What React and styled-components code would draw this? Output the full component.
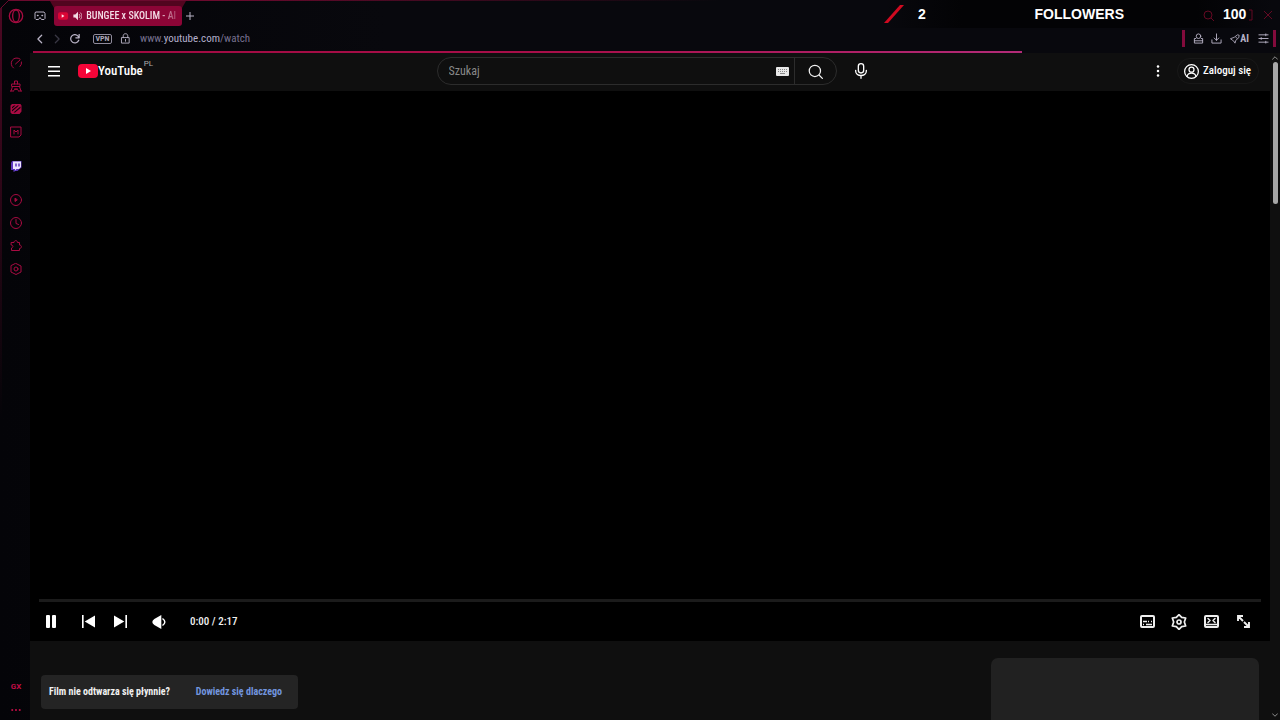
import React from "react";
import styled, { createGlobalStyle } from "styled-components";

const Global = createGlobalStyle`
  *, *::before, *::after { box-sizing: border-box; }
  body { margin: 0; background: #05060a; color: #f1f1f1; font-family: "Roboto Condensed", Roboto, "Liberation Sans", sans-serif; font-size: 10px; line-height: 14px; }
  button, input { font: inherit; color: inherit; }
`;

const Window = styled.div`
  position: relative;
  display: flex;
  flex-direction: column;
  height: 100vh;
  min-height: 400px;
  overflow: hidden;
  background: linear-gradient(90deg, #040408, #08080d 30%);
`;
const FrameEdge = styled.svg`
  position: absolute;
  top: 0;
  left: 0;
  pointer-events: none;
`;
const IconButton = styled.button`
  display: inline-flex;
  align-items: center;
  justify-content: center;
  flex: none;
  width: ${(p) => p.$w || 16}px;
  height: ${(p) => p.$h || 16}px;
  padding: 0;
  border: 0;
  background: none;
  color: ${(p) => p.$color || "#b9b3c6"};
`;
const TabBar = styled.header`
  display: flex;
  align-items: center;
  height: 30px;
  padding: 1px 8px 0;
`;
const Workspace = styled.div`
  display: flex;
  justify-content: center;
  width: 30px;
  padding-left: 2px;
`;
const Tab = styled.div`
  position: relative;
  display: flex;
  align-items: center;
  gap: 4px;
  width: 128px;
  height: 20px;
  padding: 0 6px 0 4px;
  border-radius: 3px;
  background: #8c0536;
  color: #f3dde6;
`;
const TabTitle = styled.span`
  flex: 1;
  font-weight: 500;
  white-space: nowrap;
  mask-image: linear-gradient(90deg, #000 80%, #0004);
`;
const AddressBar = styled.div`
  display: flex;
  align-items: center;
  height: 21px;
  padding: 0 4px 4px 32px;
`;
const VpnBadge = styled.button`
  display: flex;
  align-items: center;
  justify-content: center;
  width: 19px;
  height: 10px;
  margin: 0 5px 0 9px;
  padding: 0;
  border: 1px solid #8f8a9b;
  border-radius: 2px;
  background: none;
  color: #aaa5b6;
  font-size: 8px;
  line-height: 8px;
  font-weight: 700;
`;
const Address = styled.a`
  flex: 1;
  margin-left: 7px;
  color: #77718f;
  font-size: 11px;
  text-decoration: none;
  b { color: #b4afcb; font-weight: 400; }
`;
const AccentBar = styled.span`
  width: 3px;
  height: 17px;
  background: #830b3c;
`;
const BrowserTools = styled.div`
  display: flex;
  align-items: center;
  gap: 2px;
  padding: 0 2px 0 5px;
`;
const AiButton = styled(IconButton)`
  width: 27px;
  font-size: 10px;
  font-weight: 700;
`;
const Body = styled.div`
  display: flex;
  flex: 1;
  min-height: 0;
`;
const Sidebar = styled.nav`
  display: flex;
  flex-direction: column;
  align-items: center;
  gap: 22px;
  flex: none;
  width: 30px;
  padding: 6px 0 4px 2px;
`;
const SideGroup = styled.div`
  display: flex;
  flex-direction: column;
  gap: 11px;
`;
const SideFooter = styled(SideGroup)`
  margin-top: auto;
  font-family: Roboto, sans-serif;
  font-size: 8px;
  font-weight: 700;
  line-height: 12px;
`;
const SideButton = styled(IconButton).attrs({ $w: 12, $h: 12 })`
  color: ${(p) => p.$tint || "#a80b42"};
`;
const Page = styled.div`
  display: flex;
  flex-direction: column;
  flex: 1;
  min-width: 0;
`;
const LoadTrack = styled.div`
  height: 2px;
  padding-left: 3px;
`;
const LoadBar = styled.div`
  width: ${(p) => p.$value}%;
  height: 2px;
  background: linear-gradient(90deg, #a00a40, #a90f4a 55%, #b32b78);
`;
const PageRow = styled.div`
  display: flex;
  flex: 1;
  min-height: 0;
  background: #0f0f0f;
`;
const Site = styled.div`
  display: flex;
  flex-direction: column;
  flex: 1;
  min-width: 0;
`;
const SiteHeader = styled.header`
  display: grid;
  grid-template-columns: 1fr auto 1fr;
  align-items: center;
  flex: none;
  height: 38px;
  padding: 0 11px 2px 16px;
`;
const HeaderStart = styled.div`
  display: flex;
  align-items: center;
`;
const Logo = styled.a`
  display: flex;
  align-items: center;
  margin-left: 16px;
  color: #fff;
  text-decoration: none;
  font-size: 13px;
  line-height: 16px;
  font-weight: 500;
  sup {
    align-self: flex-start;
    margin: -3px 0 0 1px;
    color: #aaa;
    font: 400 8px/8px Roboto, sans-serif;
  }
`;
const SearchArea = styled.div`
  display: flex;
  align-items: center;
  gap: 16px;
`;
const SearchForm = styled.form`
  display: flex;
  align-items: center;
  width: 400px;
  max-width: 50vw;
  height: 28px;
  border: 1px solid #2c2c2c;
  border-radius: 14px;
  overflow: hidden;
`;
const SearchInput = styled.input`
  flex: 1;
  min-width: 0;
  padding: 0 11px;
  border: 0;
  background: none;
  font-size: 12px;
  &::placeholder { color: #898989; opacity: 1; }
`;
const SearchSubmit = styled(IconButton)`
  width: 42px;
  height: 28px;
  margin-left: 5px;
  border-left: 1px solid #2c2c2c;
`;
const HeaderEnd = styled.div`
  display: flex;
  align-items: center;
  justify-content: flex-end;
  gap: 11px;
`;
const SignIn = styled.a`
  display: flex;
  align-items: center;
  gap: 4px;
  width: 82px;
  height: 26px;
  padding: 0 6px;
  border: 1px solid #181818;
  border-radius: 13px;
  color: #fff;
  font-size: 11px;
  font-weight: 500;
  text-decoration: none;
  white-space: nowrap;
`;
const Player = styled.main`
  display: flex;
  flex-direction: column;
  justify-content: flex-end;
  flex: 1;
  min-height: 0;
  padding: 0 9px;
  background: #000;
`;
const SeekTrack = styled.div`
  height: 3px;
  background: #1b1b1b;
`;
const Controls = styled.div`
  display: flex;
  align-items: center;
  height: 39px;
`;
const ControlGroup = styled.div`
  display: flex;
  align-items: center;
  gap: 16px;
  margin-left: ${(p) => (p.$end ? "auto" : "0")};
  padding: ${(p) => (p.$end ? "0 10px 0 0" : "0 0 0 4px")};
`;
const PauseSlot = styled.div`
  display: flex;
  margin-right: 5px;
`;
const VolumeSlot = styled.div`
  display: flex;
  margin: 0 7px;
`;
const Time = styled.span`
  font-size: 11px;
  font-weight: 500;
`;
const Below = styled.section`
  display: flex;
  justify-content: space-between;
  flex: none;
  height: 79px;
  padding: 17px 11px 0;
`;
const Notice = styled.div`
  display: flex;
  align-items: center;
  justify-content: space-between;
  width: 257px;
  height: 34px;
  margin-top: 17px;
  padding: 0 16px 0 8px;
  border-radius: 4px;
  background: #242424;
  font-weight: 700;
  a { color: #7295df; text-decoration: none; }
`;
const SidePanel = styled.aside`
  width: 268px;
  border-radius: 7px 7px 0 0;
  background: #212121;
`;
const Scroller = styled.div`
  display: flex;
  flex-direction: column;
  align-items: center;
  flex: none;
  width: 10px;
  padding: 1px 0;
  color: #8d8d8d;
`;
const Thumb = styled.div`
  width: 5px;
  height: 142px;
  margin-bottom: auto;
  border-radius: 3px;
  background: #a7a7a7;
`;
const StreamOverlay = styled.aside`
  position: absolute;
  top: 0;
  right: 6px;
  display: grid;
  grid-template-columns: 34px 1fr auto 99px 51px;
  align-items: center;
  width: 390px;
  height: 28px;
  background: linear-gradient(90deg, #05050900, #030305 20%, #030305 80%, #05050900);
  color: #fff;
  font: 700 14px/20px "Liberation Sans", sans-serif;
`;
const Total = styled.span`
  position: relative;
  grid-column: 5;
`;
const Ghosts = styled.svg`
  position: absolute;
  right: 0;
  top: 9px;
`;

const Line = ({ w = 12, h = w, box = "0 0 24 24", sw = 2, children }) => (
  <svg width={w} height={h} viewBox={box} fill="none" stroke="currentColor" strokeWidth={sw} strokeLinecap="round" strokeLinejoin="round" aria-hidden="true">
    {children}
  </svg>
);
const Solid = ({ w = 12, h = w, box = "0 0 24 24", children }) => (
  <svg width={w} height={h} viewBox={box} fill="currentColor" aria-hidden="true">{children}</svg>
);

const sideGroups = [
  [
    ["Speed dial", <Line><path d="M7 22A11 11 0 1 1 20 4M23 10q1 5-3 9M11 14l9-8" /></Line>],
    ["GX Cleaner", <Line><path d="M9 8V2h6v6M4 8h16v5H4zM5 13l-3 9M19 13l3 9M7 22c0-5 10-5 10 0M9 18h6M1 22h5M18 22h5" /></Line>],
    ["GX Corner", <Solid><path fillRule="evenodd" d="M4 2h17l2 3v12l-4 5H4l-3-3V5zM4 11l7-6H8L4 8zm0 6L18 5h-3L4 14zm6 2 11-9V7L7 19z" /></Solid>],
    ["Mods", <Line><path d="M2 2h20v16l-4 4H2zM8 16V8l4 4 4-4v8" /></Line>],
  ],
  [
    ["Twitch", <svg width="12" height="12" viewBox="0 0 24 24"><path fill="#5b35bd" d="M4 2h19v13l-8 7h-4l-4 2v-4H2V6z" /><path fill="#ece4ff" d="M6 3h16v11l-4 4h-5l-3 3v-3H6z" /><path stroke="#5b35bd" strokeWidth="3" d="M12 7v6m6-6v6" /></svg>],
  ],
  [
    ["Player", <Line><circle cx="12" cy="12" r="11" /><path fill="currentColor" d="M10 9v6l4-3z" /></Line>],
    ["History", <Line><circle cx="12" cy="12" r="11" /><path d="M12 5v8l5 2" /></Line>],
    ["Extensions", <Line><path d="M3 5h5c0-5 7-5 7 0h4v5c5 0 5 7 0 7v4H3v-5c4-1 4-6 0-6z" /></Line>],
    ["Settings", <Line><path d="m12 1 10 5v12l-10 5-10-5V6z" /><circle cx="12" cy="12" r="4" /></Line>],
  ],
];

function BrowserChrome() {
  return (
    <>
      <TabBar>
        <IconButton aria-label="Opera menu" $color="#a60c40">
          <Line w={16} sw={2}><ellipse cx="12" cy="12" rx="10" ry="10" /><ellipse cx="12" cy="12" rx="5" ry="9" /></Line>
        </IconButton>
        <Workspace>
          <IconButton aria-label="Workspace">
            <Line w={12}><path d="M4 4h16l2 3v10l-2 2h-5l-3-4-3 4H4l-2-2V7z" /><path d="M7 11h1m8 0h1" strokeWidth="3" /></Line>
          </IconButton>
        </Workspace>
        <Tab>
          <svg width="12" height="12" viewBox="0 0 12 12" aria-hidden="true"><rect y="2" width="11" height="8" rx="2" fill="#db0535" /><path d="M4 4v4l3-2z" fill="#ffe2ea" /></svg>
          <Solid w={10}><path d="M1 8h5l7-7v22l-7-7H1z" /><path d="M16 7q5 5 0 10M19 3q9 9 0 18" fill="none" stroke="currentColor" strokeWidth="2" /></Solid>
          <TabTitle>BUNGEE x SKOLIM - Al</TabTitle>
        </Tab>
        <IconButton aria-label="New tab"><Line w={8} sw={3}><path d="M12 1v22M1 12h22" /></Line></IconButton>
      </TabBar>
      <AddressBar>
        <IconButton aria-label="Back"><Line w={10} sw={3}><path d="M16 3 7 12l9 9" /></Line></IconButton>
        <IconButton $w={18} $color="#393744" aria-label="Forward"><Line w={10} sw={3}><path d="m8 3 9 9-9 9" /></Line></IconButton>
        <IconButton $w={18} aria-label="Reload"><Line w={10} sw={3}><path d="M21 15a10 10 0 1 1-1-9l2 3M22 1v8h-8" /></Line></IconButton>
        <VpnBadge>VPN</VpnBadge>
        <IconButton aria-label="Site security"><Line w={11}><path d="M4 10h16v12H4zM7 10V6c0-6 10-6 10 0v4M12 14v4" /></Line></IconButton>
        <Address href="#watch">www.<b>youtube.com</b>/watch</Address>
        <AccentBar />
        <BrowserTools>
          <IconButton aria-label="Profile"><Line w={11}><circle cx="12" cy="7" r="5" /><path d="M6 12H3v10h18V12h-3M3 17h18" /></Line></IconButton>
          <IconButton aria-label="Downloads"><Line w={11}><path d="M2 15v7h20v-7M12 2v14m-5-5 5 5 5-5" /></Line></IconButton>
          <AiButton>
            <Line w={10}><path d="m2 11 8-3 8-6 4 1-1 6-7 6-2 7-3-5-3-2zM14 8l3 2" /></Line>AI
          </AiButton>
          <IconButton aria-label="Easy setup"><Line w={11} sw={2}><path d="M2 4h20M2 12h20M2 20h20M17 2v4M7 10v4M17 18v4" /></Line></IconButton>
        </BrowserTools>
        <AccentBar />
      </AddressBar>
    </>
  );
}

function YouTubeHeader() {
  return (
    <SiteHeader>
      <HeaderStart>
        <IconButton $color="#fff" aria-label="Menu"><Solid w={12}><path d="M0 2h24v3H0zm0 9h24v3H0zm0 9h24v3H0z" /></Solid></IconButton>
        <Logo href="#home">
          <svg width="20" height="14" viewBox="0 0 20 14" aria-hidden="true"><rect width="20" height="14" rx="4" fill="#f50538" /><path d="m8 4 5 3-5 3z" fill="#fff" /></svg>
          YouTube<sup>PL</sup>
        </Logo>
      </HeaderStart>
      <SearchArea>
        <SearchForm role="search" onSubmit={(e) => e.preventDefault()}>
          <SearchInput aria-label="Szukaj" placeholder="Szukaj" />
          <svg width="13" height="9" viewBox="0 0 13 9" aria-hidden="true"><rect width="13" height="9" rx="1" fill="#e8e8e8" /><path d="M2 2.5h9M2 4.5h9" stroke="#888" strokeDasharray="1 1" /><path d="M4 6.5h5" stroke="#888" /></svg>
          <SearchSubmit $color="#f1f1f1" aria-label="Wyszukaj"><Line w={15}><circle cx="11" cy="11" r="9" /><path d="m18 18 5 5" /></Line></SearchSubmit>
        </SearchForm>
        <IconButton $color="#fff" aria-label="Wyszukiwanie głosowe"><Line w={16}><rect x="8" y="1" width="8" height="14" rx="4" /><path d="M4 11v1c0 9 16 9 16 0v-1M12 19v4" /></Line></IconButton>
      </SearchArea>
      <HeaderEnd>
        <IconButton $color="#fff" aria-label="Ustawienia"><Solid w={12}><circle cx="12" cy="3" r="2.5" /><circle cx="12" cy="12" r="2.5" /><circle cx="12" cy="21" r="2.5" /></Solid></IconButton>
        <SignIn href="#login">
          <Line w={15}><circle cx="12" cy="12" r="11" /><circle cx="12" cy="9" r="4" /><path d="M5 20c1-7 13-7 14 0" /></Line>
          Zaloguj się
        </SignIn>
      </HeaderEnd>
    </SiteHeader>
  );
}

function VideoPlayer() {
  return (
    <Player>
      <SeekTrack />
      <Controls>
        <ControlGroup>
          <PauseSlot><IconButton $color="#fff" aria-label="Wstrzymaj"><Solid w={10} h={14} box="0 0 10 14"><rect width="4" height="13" rx="1" /><rect x="6" width="4" height="13" rx="1" /></Solid></IconButton></PauseSlot>
          <IconButton $color="#fff" aria-label="Poprzedni"><Solid w={13}><path d="M0 0h3v24H0zM24 1v22L5 12z" /></Solid></IconButton>
          <IconButton $color="#fff" aria-label="Następny"><Solid w={13}><path d="M21 0h3v24h-3zM0 1v22l19-11z" /></Solid></IconButton>
          <VolumeSlot><IconButton $color="#fff" aria-label="Wycisz"><Solid w={14}><path d="M16 0v24L4 17q-7-5 0-10z" /><path d="M18 6q8 6 0 12" fill="none" stroke="currentColor" strokeWidth="2.5" /></Solid></IconButton></VolumeSlot>
          <Time>0:00 / 2:17</Time>
        </ControlGroup>
        <ControlGroup $end>
          <IconButton $color="#eee" aria-label="Napisy"><Line w={15} h={13} box="0 0 15 13" sw={2}><rect x="1" y="1" width="13" height="11" rx="1" /><path d="M3 6.5h4m1 0h1m2 0h1M3 9.5h1m2 0h6" strokeWidth="1.4" strokeLinecap="butt" /></Line></IconButton>
          <IconButton $color="#eee" aria-label="Ustawienia odtwarzacza"><Line w={16} sw={2.6}><path d="m12 1 4 4 6 1-2 6 2 6-6 1-4 4-4-4-6-1 2-6-2-6 6-1z" /><circle cx="12" cy="12" r="3" /></Line></IconButton>
          <IconButton $color="#eee" aria-label="Tryb kinowy"><Line w={15} h={13} box="0 0 15 13"><rect x="1" y="1" width="13" height="11" rx="1" /><path d="M1 9.500h13M4 3.500l2 2-2 2m7-4L9 5.500l2 2" strokeWidth="1.5" /></Line></IconButton>
          <IconButton $color="#eee" aria-label="Pełny ekran"><Line w={13} box="0 0 13 13"><path d="M1 6V1h5M1 1l5 5M12 7v5H7m5 0L7 7" strokeWidth="1.9" strokeLinecap="butt" strokeLinejoin="miter" /></Line></IconButton>
        </ControlGroup>
      </Controls>
    </Player>
  );
}

export default function App() {
  return (
    <Window>
      <Global />
      <FrameEdge width="720" height="420" viewBox="0 0 720 420" aria-hidden="true">
        <defs>
          <linearGradient id="edgeX"><stop stopColor="#6c0a2e" /><stop offset=".3" stopColor="#6c0a2e" /><stop offset="1" stopColor="#6c0a2e" stopOpacity="0" /></linearGradient>
          <linearGradient id="edgeY" x2="0" y2="1"><stop stopColor="#6c0a2e" /><stop offset="1" stopColor="#6c0a2e" stopOpacity="0" /></linearGradient>
        </defs>
        <path d="M8 0h712v1H8z" fill="url(#edgeX)" />
        <path d="M0 8h2v412H0z" fill="url(#edgeY)" opacity=".7" />
        <path d="m1 8 7-7" stroke="#6c0a2e" strokeWidth="1" />
        <path d="M50 1h136l-4 7H54z" fill="#52051f" />
      </FrameEdge>
      <BrowserChrome />
      <Body>
        <Sidebar>
          {sideGroups.map((group, i) => (
            <SideGroup key={i}>
              {group.map(([name, icon]) => <SideButton key={name} aria-label={name}>{icon}</SideButton>)}
            </SideGroup>
          ))}
          <SideFooter>
            <SideButton $tint="#c30d47">GX</SideButton>
            <SideButton $tint="#c30d47" aria-label="More"><Solid w={10}><circle cx="3" cy="12" r="2.5" /><circle cx="12" cy="12" r="2.5" /><circle cx="21" cy="12" r="2.5" /></Solid></SideButton>
          </SideFooter>
        </Sidebar>
        <Page>
          <LoadTrack><LoadBar $value={79.3} /></LoadTrack>
          <PageRow>
            <Site>
              <YouTubeHeader />
              <VideoPlayer />
              <Below>
                <Notice>Film nie odtwarza się płynnie?<a href="#why">Dowiedz się dlaczego</a></Notice>
                <SidePanel />
              </Below>
            </Site>
            <Scroller>
              <Line w={6} h={8} sw={4}><path d="m2 17 10-10 10 10" /></Line>
              <Thumb />
              <Line w={6} h={8} sw={4}><path d="m2 7 10 10L22 7" /></Line>
            </Scroller>
          </PageRow>
        </Page>
      </Body>
      <StreamOverlay>
        <svg width="20" height="20" viewBox="0 0 20 20" aria-hidden="true"><path d="M0 19 16 1h4L4 19z" fill="#d00a20" /></svg>
        <span>2</span>
        <span>FOLLOWERS</span>
        <Total>100</Total>
        <Ghosts width="72" height="14" viewBox="0 0 72 14" fill="none" stroke="#650923" aria-hidden="true"><circle cx="6" cy="6" r="4" /><path d="m9 9 3 3M47 1h3v10h-3M62 2l8 8m0-8-8 8" /></Ghosts>
      </StreamOverlay>
    </Window>
  );
}
